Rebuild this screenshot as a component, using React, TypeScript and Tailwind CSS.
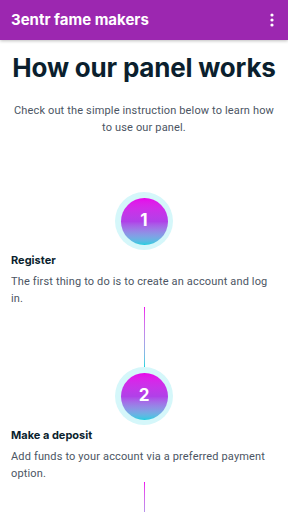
import React from 'react'

const steps = [
  { n: 1, title: 'Register', text: 'The first thing to do is to create an account and log in.' },
  { n: 2, title: 'Make a deposit', text: 'Add funds to your account via a preferred payment option.' },
]

export default function App() {
  return (
    <div className="w-[288px] h-[512px] overflow-hidden bg-white" style={{ fontFamily: 'Inter, Roboto, sans-serif' }}>
      {/* App bar */}
      <div className="h-10 bg-[#9c27b0] flex items-center justify-between pl-[11px] pr-[14px] shadow-[0_1px_3px_rgba(0,0,0,0.25)]">
        <span className="text-white font-bold text-[15px]">3entr fame makers</span>
        <svg width="4" height="14" viewBox="0 0 4 14" fill="white">
          <circle cx="2" cy="2" r="1.6" />
          <circle cx="2" cy="7" r="1.6" />
          <circle cx="2" cy="12" r="1.6" />
        </svg>
      </div>

      <h1 className="mt-[11px] text-center text-[26px] leading-[34px] font-bold text-[#0b1f2e] tracking-[-0.2px]">
        How our panel works
      </h1>
      <p
        className="mt-[17px] px-[12px] text-center text-[11px] leading-[17px] text-[#4b5563] tracking-[0.15px]"
        style={{ fontFamily: 'Roboto, sans-serif' }}
      >
        Check out the simple instruction below to learn how to use our panel.
      </p>

      <div className="mt-[56px] flex flex-col">
        {steps.map((s) => (
          <div key={s.n} className="flex flex-col">
            <div className="flex justify-center">
              <div className="w-[58px] h-[58px] rounded-full bg-[#d5f7fa] flex items-center justify-center">
                <div className="w-[47px] h-[47px] rounded-full bg-gradient-to-b from-[#e800ea] via-[#b040e8] to-[#10cde0] flex items-center justify-center text-white font-bold text-[17px]">
                  {s.n}
                </div>
              </div>
            </div>
            <div className="px-[11px] mt-[2px]">
              <div className="text-[11px] font-bold text-[#0b1f2e] leading-[16px]">{s.title}</div>
              <p
                className="mt-[5px] text-[11px] leading-[17px] text-[#4b5563] tracking-[0.15px]"
                style={{ fontFamily: 'Roboto, sans-serif' }}
              >
                {s.text}
              </p>
            </div>
            <div className="flex justify-center">
              <div className="w-px h-[60px] bg-gradient-to-b from-[#ee00f0] to-[#00d4e0]" />
            </div>
          </div>
        ))}
      </div>
    </div>
  )
}
